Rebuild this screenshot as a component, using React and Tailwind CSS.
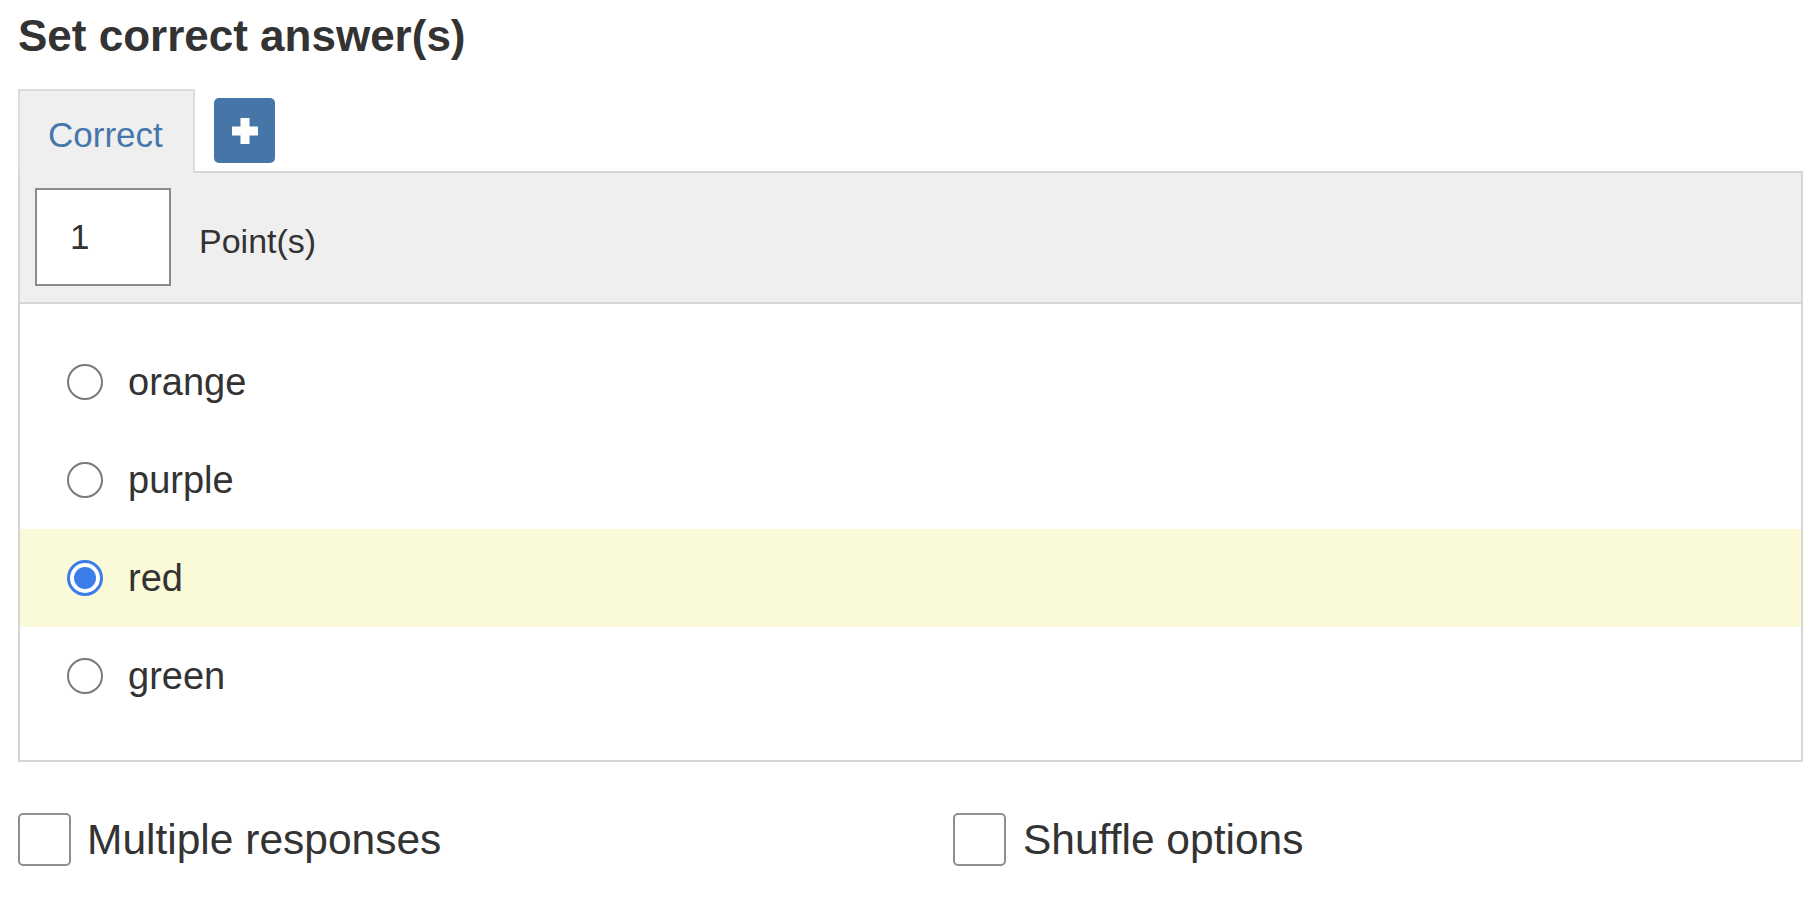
const options = [
  { label: 'orange', checked: false },
  { label: 'purple', checked: false },
  { label: 'red', checked: true },
  { label: 'green', checked: false },
];

const Radio = ({ checked }) =>
  checked ? (
    <span className="w-[36px] h-[36px] rounded-full border-[3px] border-[#3b7de9] bg-white flex items-center justify-center shrink-0">
      <span className="w-[22px] h-[22px] rounded-full bg-[#3b7de9]" />
    </span>
  ) : (
    <span className="w-[36px] h-[36px] rounded-full border-2 border-[#7a7a7a] bg-white shrink-0" />
  );

const Checkbox = () => (
  <span className="w-[53px] h-[53px] rounded-[5px] border-2 border-[#8f8f8f] bg-white shrink-0" />
);

export default function App() {
  return (
    <div className="min-h-screen bg-white text-[#333] font-['Liberation_Sans',Arial,sans-serif]">
      <div className="ml-[18px] mr-[17px]">
        {/* Heading */}
        <h1 className="pt-[12px] text-[44px] leading-[48px] font-bold text-[#333]">Set correct answer(s)</h1>

        {/* Tabs */}
        <div className="mt-[29px] flex items-end">
          <div className="relative z-10 -mb-[2px] w-[177px] h-[84px] border-t-2 border-x-2 border-[#dcdcdc] bg-[#efefef] pl-[28px] pt-[24px]">
            <span className="block text-[35px] leading-[40px] text-[#4577ad]">Correct</span>
          </div>
          <button className="ml-[19px] mb-[8px] w-[61px] h-[65px] rounded-[5px] bg-[#4676a7] flex items-center justify-center">
            <svg width="26" height="26" viewBox="0 0 26 26">
              <rect x="8.5" y="0" width="9" height="26" fill="#fff" />
              <rect x="0" y="8.5" width="26" height="9" fill="#fff" />
            </svg>
          </button>
        </div>

        {/* Panel */}
        <div className="border-2 border-[#d6d6d6]">
          <div className="bg-[#efefef] border-b-2 border-[#d6d6d6] pl-[15px] pt-[15px] pb-[16px] flex items-center">
            <div className="w-[136px] h-[98px] border-2 border-[#8b8b8b] bg-white pl-[33px] flex items-center">
              <span className="text-[35px] leading-[40px]">1</span>
            </div>
            <span className="ml-[28px] mt-[8px] text-[34px] leading-[40px]">Point(s)</span>
          </div>
          <div className="pt-[29px] pb-[35px]">
            {options.map((o) => (
              <div
                key={o.label}
                className={`h-[98px] pl-[47px] flex items-center gap-[25px] ${o.checked ? 'bg-[#fafad9]' : ''}`}
              >
                <Radio checked={o.checked} />
                <span className="text-[38px] leading-[44px]">{o.label}</span>
              </div>
            ))}
          </div>
        </div>

        {/* Options */}
        <div className="mt-[51px] flex items-center">
          <label className="w-[935px] flex items-center gap-[16px]">
            <Checkbox />
            <span className="text-[42.5px] leading-[48px]">Multiple responses</span>
          </label>
          <label className="flex items-center gap-[17px]">
            <Checkbox />
            <span className="text-[42.5px] leading-[48px]">Shuffle options</span>
          </label>
        </div>
      </div>
    </div>
  );
}
